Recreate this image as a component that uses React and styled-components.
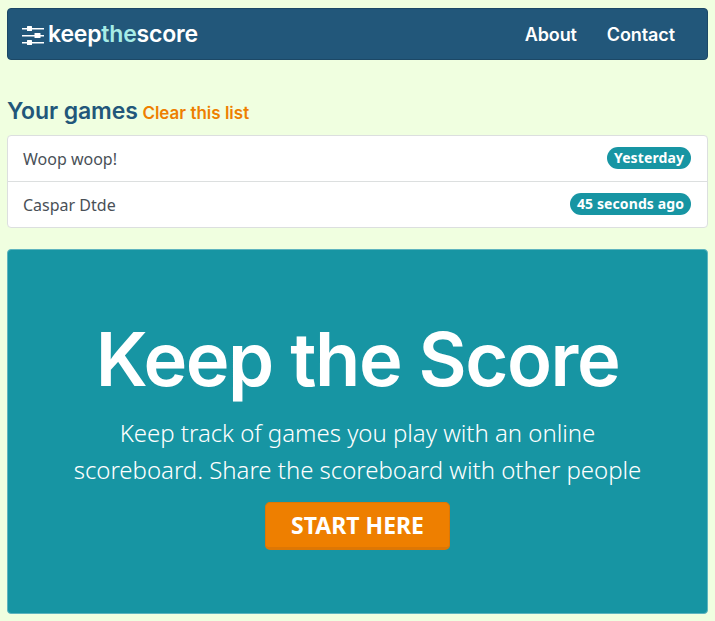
import React from 'react';
import styled, { createGlobalStyle } from 'styled-components';

const GlobalStyle = createGlobalStyle`
  html, body {
    margin: 0;
    padding: 0;
    background: #f0ffe0;
  }
  body {
    font-family: "Noto Sans", "Open Sans", sans-serif;
    color: #495057;
  }
`;

const Page = styled.div`
  padding: 8px 7px 7px 7px;
  height: 621px;
  box-sizing: border-box;
  overflow: hidden;
  display: flex;
  flex-direction: column;
`;

const Navbar = styled.nav`
  height: 52px;
  box-sizing: border-box;
  background: #22577a;
  border: 1px solid #1c4866;
  border-radius: 4px;
  display: flex;
  align-items: center;
  justify-content: space-between;
  padding: 0 32px 0 14px;
`;

const Brand = styled.a`
  display: flex;
  align-items: center;
  gap: 4px;
  color: #fff;
  font-family: Inter, sans-serif;
  font-weight: 600;
  font-size: 23px;
  letter-spacing: -0.2px;
`;

const BrandAccent = styled.span`
  color: #a6ece6;
`;

const NavLinks = styled.div`
  display: flex;
  gap: 30px;
`;

const NavLink = styled.a`
  color: #fff;
  font-family: Inter, sans-serif;
  font-weight: 600;
  font-size: 18px;
  letter-spacing: -0.1px;
`;

const Heading = styled.h2`
  margin: 38px 0 8px 0;
  font-family: Inter, sans-serif;
  font-weight: 600;
  font-size: 23px;
  line-height: 27px;
  letter-spacing: -0.1px;
  color: #22577a;
`;

const ClearLink = styled.a`
  color: #ee7f00;
  font-size: 17px;
  letter-spacing: 0;
  margin-left: -1px;
`;

const GameList = styled.ul`
  list-style: none;
  margin: 0;
  padding: 0;
  background: #fff;
  border: 1px solid #dcdfdf;
  border-radius: 4px;
`;

const GameRow = styled.li`
  height: ${(p) => (p.$first ? '45px' : '46px')};
  box-sizing: border-box;
  display: flex;
  align-items: center;
  justify-content: space-between;
  padding: 0 16px 0 15px;
  font-size: 16px;
  border-top: ${(p) => (p.$first ? 'none' : '1px solid #dcdfdf')};
`;

const Badge = styled.span`
  background: #1795a3;
  color: #fff;
  font-weight: 700;
  font-size: 14px;
  line-height: 22px;
  letter-spacing: 0.1px;
  padding: 0 7px;
  border-radius: 11px;
  margin-top: -1px;
`;

const Hero = styled.section`
  margin-top: 21px;
  flex: 1;
  background: #1795a3;
  border: 1px solid #5fb5bf;
  border-radius: 4px;
  display: flex;
  flex-direction: column;
  align-items: center;
  color: #fff;
  padding-top: 61px;
`;

const HeroTitle = styled.h1`
  margin: 0;
  font-family: Inter, sans-serif;
  font-weight: 600;
  font-size: 74px;
  line-height: 96px;
  letter-spacing: -1.4px;
`;

const HeroText = styled.p`
  margin: 7px 0 14px 0;
  font-weight: 300;
  font-size: 24px;
  line-height: 37px;
  letter-spacing: -0.03px;
  text-align: center;
  width: 600px;
`;

const StartButton = styled.a`
  background: #ee7f00;
  border: 1px solid #dd7705;
  border-bottom-width: 3px;
  border-radius: 5px;
  color: #fff;
  font-weight: 700;
  font-size: 23px;
  line-height: 44px;
  padding: 0 25px;
`;

const SliderIcon = () => (
  <svg width="22" height="24" viewBox="0 0 22 24" fill="#fff">
    <rect x="0" y="6" width="22" height="1.5" />
    <rect x="0" y="13" width="22" height="1.5" />
    <rect x="0" y="20" width="22" height="1.5" />
    <rect x="5" y="4" width="5" height="5" rx="0.5" />
    <rect x="12.5" y="11" width="6" height="5" rx="0.5" />
    <rect x="5" y="18" width="5" height="5" rx="0.5" />
  </svg>
);

const games = [
  { name: 'Woop woop!', when: 'Yesterday' },
  { name: 'Caspar Dtde', when: '45 seconds ago' },
];

export default function App() {
  return (
    <Page>
      <GlobalStyle />
      <Navbar>
        <Brand>
          <SliderIcon />
          <span>
            keep<BrandAccent>the</BrandAccent>score
          </span>
        </Brand>
        <NavLinks>
          <NavLink>About</NavLink>
          <NavLink>Contact</NavLink>
        </NavLinks>
      </Navbar>
      <Heading>
        Your games <ClearLink>Clear this list</ClearLink>
      </Heading>
      <GameList>
        {games.map((g, i) => (
          <GameRow key={g.name} $first={i === 0}>
            {g.name}
            <Badge>{g.when}</Badge>
          </GameRow>
        ))}
      </GameList>
      <Hero>
        <HeroTitle>Keep the Score</HeroTitle>
        <HeroText>
          Keep track of games you play with an online scoreboard. Share the scoreboard with other people
        </HeroText>
        <StartButton>START HERE</StartButton>
      </Hero>
    </Page>
  );
}
